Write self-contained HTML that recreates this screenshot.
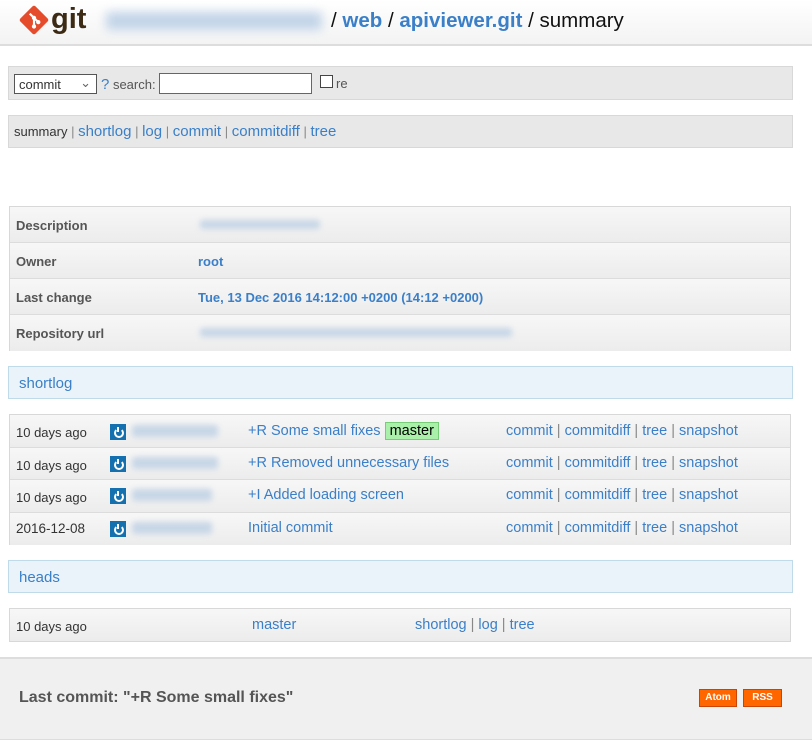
<!DOCTYPE html>
<html><head><meta charset="utf-8"><style>
*{box-sizing:border-box;margin:0;padding:0}
body{width:812px;height:746px;background:#fff;font-family:"Liberation Sans",Arial,sans-serif;position:relative;overflow:hidden;color:#333}
.a{position:absolute}
a,.l{color:#3a7fc8;text-decoration:none}
.hdr{left:0;top:0;width:812px;height:46px;background:linear-gradient(#fff,#f3f3f3);border-bottom:2px solid #ddd}
.bar{left:8px;width:785px;background:#e8e8e8;border:1px solid #d8d8d8}
.tbl{left:9px;width:782px;border:1px solid #d8d8d8}
.row{position:absolute;left:0;width:780px;background:linear-gradient(#f7f7f7,#ececec);border-bottom:1px solid #dcdcdc;font-size:13px}
.blue{left:8px;width:785px;height:33px;background:#e9f3f9;border:1px solid #bfdbe9;font-size:15px;color:#3a7fc8;padding:8px 10px}
.blur{position:absolute;background:#c7d6e6;filter:blur(3px);border-radius:3px}
.ic{position:absolute;left:100px;width:16px;height:16px;background:#1570b0}
.ic:after{content:"";position:absolute;left:4px;top:4px;width:6px;height:6px;border:2px solid #fff;border-top-color:transparent;border-radius:50%}
.ic:before{content:"";position:absolute;left:7px;top:3px;width:2px;height:5px;background:#fff}
.lk{font-size:14.5px;color:#888}
</style></head><body>
<div class="a hdr"></div>
<svg class="a" style="left:19px;top:5px" width="30" height="30" viewBox="0 0 28 28"><rect x="4" y="4" width="20" height="20" rx="2" transform="rotate(45 14 14)" fill="#e44c2c"/><path d="M10 8l8 8M14 12v8" stroke="#fff" stroke-width="2"/><circle cx="14" cy="12" r="2" fill="#fff"/><circle cx="14" cy="20" r="2" fill="#fff"/><circle cx="18" cy="16" r="2" fill="#fff"/></svg>
<div class="a" style="left:51px;top:3px;font-size:29px;font-weight:bold;color:#3c2a14">git</div>
<div class="blur" style="left:106px;top:12px;width:216px;height:18px;background:#c2d4e8;filter:blur(5px)"></div>
<div class="a" style="left:331px;top:9px;font-size:20.5px;color:#111">/ <b class="l">web</b> / <b class="l">apiviewer.git</b> / summary</div>

<div class="a bar" style="top:66px;height:34px"></div>
<div class="a" style="left:14px;top:74px;width:83px;height:20px;border:1px solid #555;background:#fff;font-size:13px;padding:2px 4px">commit<span style="position:absolute;right:5px;top:0;color:#666">&#8964;</span></div>
<div class="a" style="left:101px;top:76px;font-size:13px;color:#555"><span class="l" style="font-size:15px">?</span> search:</div>
<div class="a" style="left:159px;top:73px;width:153px;height:21px;border:1px solid #666;background:#fff"></div>
<div class="a" style="left:320px;top:75px;width:13px;height:13px;border:1px solid #444;background:#fff"></div>
<div class="a" style="left:336px;top:76px;font-size:13px;color:#555">re</div>

<div class="a bar" style="top:115px;height:33px"></div>
<div class="a" style="left:14px;top:123px;font-size:13px;color:#333">summary <span style="color:#888">|</span> <span class="l" style="font-size:15px">shortlog</span> <span style="color:#888">|</span> <span class="l" style="font-size:15px">log</span> <span style="color:#888">|</span> <span class="l" style="font-size:15px">commit</span> <span style="color:#888">|</span> <span class="l" style="font-size:15px">commitdiff</span> <span style="color:#888">|</span> <span class="l" style="font-size:15px">tree</span></div>

<div class="a tbl" style="top:206px;height:145px">
<div class="row" style="top:0;height:36px"><b class="a" style="left:6px;top:11px;color:#555">Description</b><div class="blur" style="left:190px;top:13px;width:120px;height:9px"></div></div>
<div class="row" style="top:36px;height:36px"><b class="a" style="left:6px;top:11px;color:#555">Owner</b><b class="a l" style="left:188px;top:11px;font-size:13px">root</b></div>
<div class="row" style="top:72px;height:36px"><b class="a" style="left:6px;top:11px;color:#555">Last change</b><b class="a l" style="left:188px;top:11px;font-size:13px">Tue, 13 Dec 2016 14:12:00 +0200 (14:12 +0200)</b></div>
<div class="row" style="top:108px;height:36px;border:0"><b class="a" style="left:6px;top:11px;color:#555">Repository url</b><div class="blur" style="left:190px;top:13px;width:312px;height:9px"></div></div>
</div>

<div class="a blue" style="top:366px">shortlog</div>

<div class="a tbl" style="top:414px;height:131px">
<div class="row" style="top:0;height:33px"><span class="a" style="left:6px;top:10px;font-size:13px">10 days ago</span><div class="ic" style="top:9px"></div><div class="blur" style="left:122px;top:10px;width:86px;height:12px"></div><span class="a l" style="left:238px;top:8px;font-size:14.5px">+R Some small fixes <span style="background:#aaf0aa;color:#000;border:1px solid #7c7;padding:0 4px;font-size:14.5px">master</span></span><span class="a lk" style="left:496px;top:8px"><span class="l">commit</span> | <span class="l">commitdiff</span> | <span class="l">tree</span> | <span class="l">snapshot</span></span></div>
<div class="row" style="top:33px;height:32px"><span class="a" style="left:6px;top:10px;font-size:13px">10 days ago</span><div class="ic" style="top:8px"></div><div class="blur" style="left:122px;top:9px;width:86px;height:12px"></div><span class="a l" style="left:238px;top:7px;font-size:14.5px">+R Removed unnecessary files</span><span class="a lk" style="left:496px;top:7px"><span class="l">commit</span> | <span class="l">commitdiff</span> | <span class="l">tree</span> | <span class="l">snapshot</span></span></div>
<div class="row" style="top:65px;height:33px"><span class="a" style="left:6px;top:10px;font-size:13px">10 days ago</span><div class="ic" style="top:8px"></div><div class="blur" style="left:122px;top:9px;width:80px;height:12px"></div><span class="a l" style="left:238px;top:7px;font-size:14.5px">+I Added loading screen</span><span class="a lk" style="left:496px;top:7px"><span class="l">commit</span> | <span class="l">commitdiff</span> | <span class="l">tree</span> | <span class="l">snapshot</span></span></div>
<div class="row" style="top:98px;height:32px;border:0"><span class="a" style="left:6px;top:8px;font-size:13.5px">2016-12-08</span><div class="ic" style="top:8px"></div><div class="blur" style="left:122px;top:9px;width:80px;height:12px"></div><span class="a l" style="left:238px;top:7px;font-size:14.5px">Initial commit</span><span class="a lk" style="left:496px;top:7px"><span class="l">commit</span> | <span class="l">commitdiff</span> | <span class="l">tree</span> | <span class="l">snapshot</span></span></div>
</div>

<div class="a blue" style="top:560px">heads</div>

<div class="a tbl" style="top:608px;height:34px">
<div class="row" style="top:0;height:32px;border:0"><span class="a" style="left:6px;top:10px;font-size:13px">10 days ago</span><span class="a l" style="left:242px;top:8px;font-size:14.5px">master</span><span class="a lk" style="left:405px;top:8px"><span class="l">shortlog</span> | <span class="l">log</span> | <span class="l">tree</span></span></div>
</div>

<div class="a" style="left:0;top:657px;width:812px;height:83px;background:#f0f0f0;border-top:2px solid #ddd;border-bottom:1px solid #ddd"></div>
<b class="a" style="left:19px;top:689px;font-size:16px;color:#555">Last commit: "+R Some small fixes"</b>
<div class="a" style="left:699px;top:689px;width:38px;height:18px;background:#f60;border:1px solid #c40;color:#fff;font-size:10px;font-weight:bold;text-align:center;line-height:16px">Atom</div>
<div class="a" style="left:743px;top:689px;width:39px;height:18px;background:#f60;border:1px solid #c40;color:#fff;font-size:10px;font-weight:bold;text-align:center;line-height:16px">RSS</div>
</body></html>
